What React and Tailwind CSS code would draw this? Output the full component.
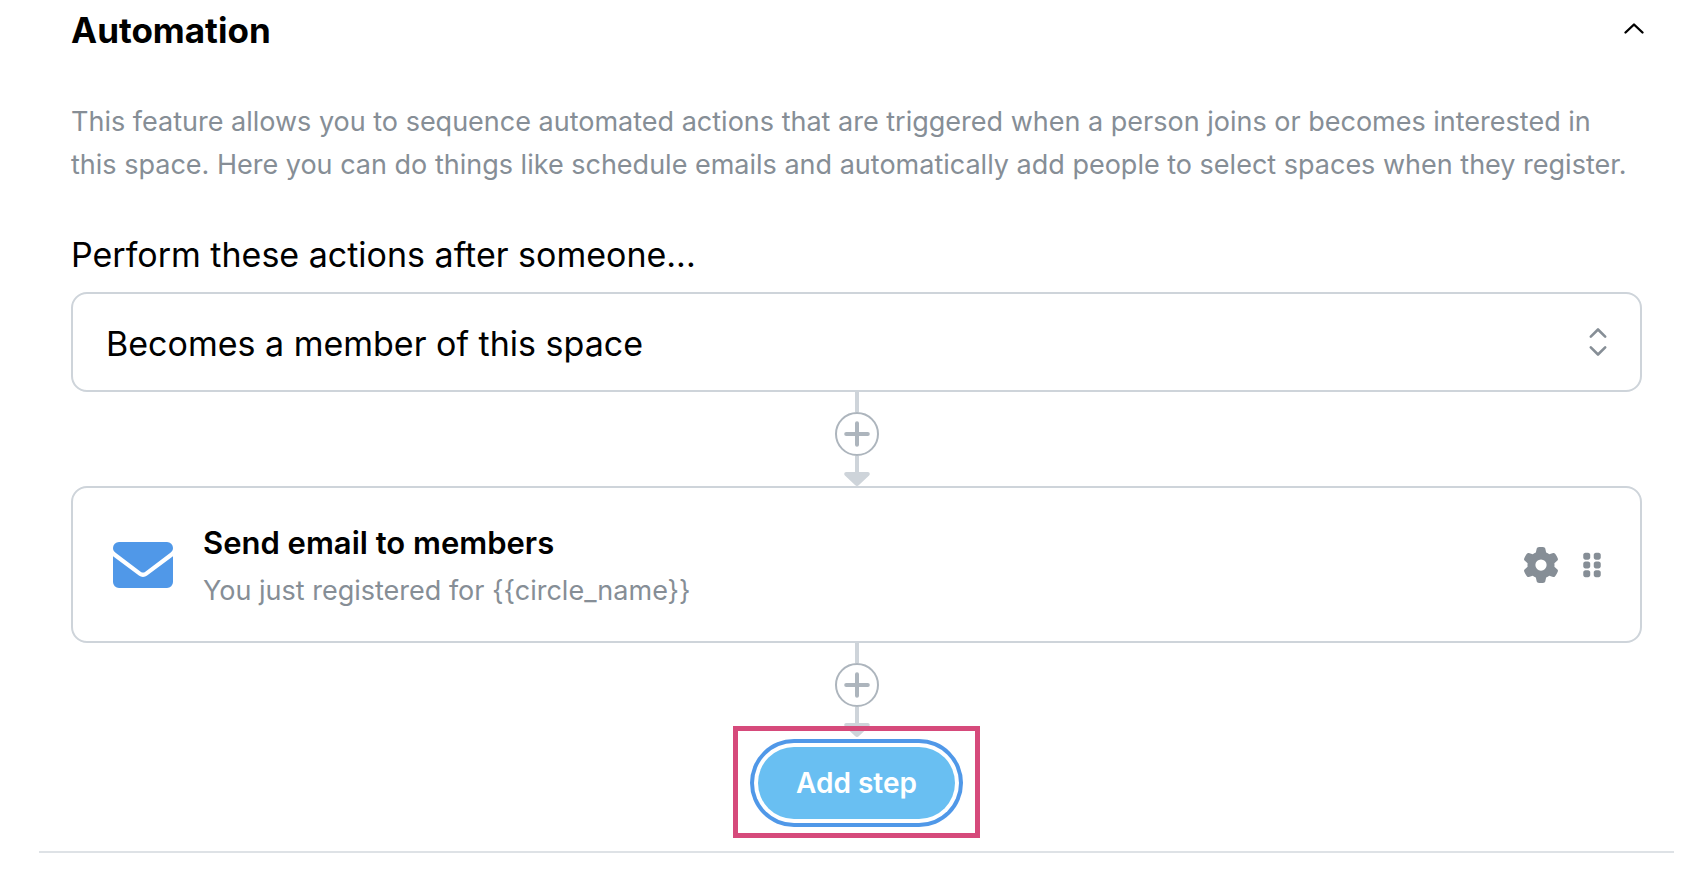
import { useState } from 'react';
import { FaGear, FaGripVertical } from 'react-icons/fa6';

const triggers = [
  { value: 'member', label: 'Becomes a member of this space' },
  { value: 'interested', label: 'Becomes interested in this space' },
];

const steps = [
  {
    id: 1,
    icon: EnvelopeIcon,
    title: 'Send email to members',
    subtitle: 'You just registered for {{circle_name}}',
  },
];

export default function App() {
  const [open, setOpen] = useState(true);
  const [trigger, setTrigger] = useState('member');

  return (
    <main className="bg-white pl-[39px] pr-[34px] font-['Inter',sans-serif] text-black">
      <section className="border-b-2 border-[#dee2e6] px-8 pb-8">
        <header className="flex items-center justify-between h-[60px]">
          <h2 className="text-[35px] leading-[60px] font-bold">Automation</h2>
          <button
            type="button"
            aria-label="Toggle automation"
            aria-expanded={open}
            onClick={() => setOpen(!open)}
            className="-mr-1 pb-1"
          >
            <svg className="w-6 h-4" viewBox="0 0 24 16" fill="none" stroke="currentColor" strokeWidth="2.4" strokeLinecap="round" strokeLinejoin="round">
              <path d="M3.5 12.5 12 4.5l8.5 8" />
            </svg>
          </button>
        </header>

        {open && (
          <>
            <p className="mt-10 text-[27px] leading-[43px] text-[#868e96]">
              This feature allows you to sequence automated actions that are triggered when a person joins or becomes interested in this space. Here you can do things like schedule emails and automatically add people to select spaces when they register.
            </p>

            <label htmlFor="trigger" className="block mt-[42px] text-[34px] leading-[54px]">
              Perform these actions after someone...
            </label>
            <div className="relative mt-[10px]">
              <select
                id="trigger"
                value={trigger}
                onChange={(e) => setTrigger(e.target.value)}
                className="block w-full h-[100px] appearance-none rounded-2xl border-2 border-[#ced4da] bg-white pl-[33px] pr-20 pt-0.5 text-[34px]"
              >
                {triggers.map((t) => (
                  <option key={t.value} value={t.value}>{t.label}</option>
                ))}
              </select>
              <svg className="absolute right-8 top-1/2 -translate-y-1/2 w-6 h-8 text-[#868e96] pointer-events-none" viewBox="0 0 24 32" fill="none" stroke="currentColor" strokeWidth="2.6" strokeLinecap="round" strokeLinejoin="round">
                <path d="M4.8 10.7 12 3.5l7.2 7.2M4.8 21.3l7.2 7.2 7.2-7.2" />
              </svg>
            </div>

            {steps.map((step) => (
              <div key={step.id}>
                <Connector />
                <Step {...step} />
              </div>
            ))}

            <Connector />
            <div className="flex justify-center pt-[10px]">
              <div className="relative">
                {/* highlight frame around the button */}
                <div className="absolute -inset-x-[25px] -top-[21px] -bottom-[19px] border-[5px] border-[#d64a7b] pointer-events-none" />
                <button
                  type="button"
                  className="relative block h-[72px] px-[38px] rounded-full bg-[#69bff2] text-[28px] font-semibold text-white ring-4 ring-[#5098e8] ring-offset-4 ring-offset-white"
                >
                  Add step
                </button>
              </div>
            </div>
          </>
        )}
      </section>
    </main>
  );
}

function Connector() {
  return (
    <div className="flex flex-col items-center">
      <div className="w-1 h-5 bg-[#ced4da]" />
      <button
        type="button"
        aria-label="Insert step"
        className="flex items-center justify-center w-11 h-11 rounded-full border-2 border-[#adb5bd] bg-white text-[#adb5bd]"
      >
        <svg className="w-7 h-7" viewBox="0 0 28 28" fill="none" stroke="currentColor" strokeWidth="4" strokeLinecap="round">
          <path d="M14 3.2v21.6M3.2 14h21.6" />
        </svg>
      </button>
      <div className="w-1 h-4 bg-[#ced4da]" />
      <svg className="w-[26px] h-[14px] text-[#ced4da]" viewBox="0 0 26 14" fill="currentColor">
        <path d="M2.2 0h21.6c1.9 0 2.6 2.2 1.3 3.4L15 13a3 3 0 0 1-4 0L.9 3.4C-.4 2.2.3 0 2.2 0z" />
      </svg>
    </div>
  );
}

function Step({ icon: Icon, title, subtitle }) {
  return (
    <article className="flex items-center rounded-2xl border-2 border-[#ced4da] bg-white pl-10 pr-[34px] py-[27px]">
      <Icon className="w-[60px] h-[46px] text-[#5098e8]" />
      <div className="ml-[30px] pt-[3px] flex-1">
        <h3 className="text-[31px] leading-[50px] font-semibold">{title}</h3>
        <p className="text-[27px] leading-[46px] text-[#868e96]">{subtitle}</p>
      </div>
      <div className="flex items-center gap-[19px] text-[#868e96]">
        <button type="button" aria-label="Step settings">
          <FaGear className="w-9 h-9" />
        </button>
        <button type="button" aria-label="Drag to reorder">
          <FaGripVertical className="w-7 h-7" />
        </button>
      </div>
    </article>
  );
}

function EnvelopeIcon({ className }) {
  return (
    <svg className={className} viewBox="0 0 60 46" fill="currentColor">
      <path d="M6 0h48a6 6 0 0 1 6 6c0 2-1 3.7-2.6 4.8L32 29.9c-1.2.9-2.800.9-4 0L2.6 10.8C1 9.7 0 8 0 6a6 6 0 0 1 6-6z" />
      <path d="M0 14.3 25.900 33.6c2.400 1.8 5.800 1.8 8.200 0L60 14.3V40a6 6 0 0 1-6 6H6a6 6 0 0 1-6-6z" />
    </svg>
  );
}
